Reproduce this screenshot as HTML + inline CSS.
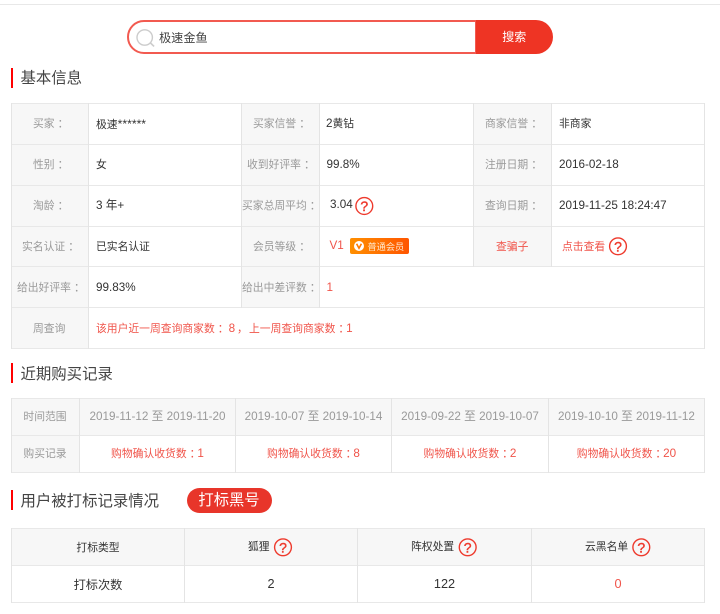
<!DOCTYPE html>
<html lang="zh"><head><meta charset="utf-8"><title>查询</title>
<style>
html,body{margin:0;padding:0;background:#fff}
#p{position:relative;width:720px;height:614px;overflow:hidden;background:#fff;font-family:"Liberation Sans","Noto Sans CJK SC",sans-serif;font-size:10.8px;color:#333}
#p div{position:absolute;box-sizing:border-box}
.h{height:1px;background:#e8e8e8}
.v{width:1px;background:#e4e4e4}
.g{background:#f7f7f7}
.t{white-space:nowrap;height:16px;line-height:16px;margin-top:1px}
.l{color:#999}
.r{color:#f0544a}
.c{text-align:center}
.n{font-size:11.7px}
i{font-style:normal;position:relative;left:3px}
b{font-weight:normal;font-size:11.7px}
.hd{font-size:15.4px;color:#444;height:22px;line-height:22px;white-space:nowrap;left:20.5px;margin-top:1px}
.bar{left:11px;width:2px;height:20px;background:#f00}
svg{position:absolute;overflow:visible}
.q{font-family:"Liberation Sans",sans-serif;font-size:14px;fill:#ee3a2d;stroke:#ee3a2d;stroke-width:.4;text-anchor:middle}
</style></head><body><div id="p">
<div style="left:0;top:4px;width:720px;height:1px;background:#e8e8e8"></div>

<!-- search -->
<div style="left:126.5px;top:20px;width:350px;height:34px;border:2px solid #f25a50;border-radius:17px 0 0 17px;background:#fff"></div>
<div style="left:475.5px;top:20px;width:77.5px;height:34px;background:#ee3424;border-radius:0 17px 17px 0;color:#fff;font-size:12px;line-height:34px;text-align:center">搜索</div>
<svg style="left:0;top:0" width="1" height="1"><circle cx="144.7" cy="37.5" r="7.7" fill="none" stroke="#ccc" stroke-width="1.4"/><path d="M150.5 43l3.6 3.4" stroke="#ccc" stroke-width="1.6" fill="none"/></svg>
<div class="t" style="left:159px;top:29px;font-size:12.2px;color:#444">极速金鱼</div>

<div class="bar" style="top:68px"></div><div class="hd" style="top:67px">基本信息</div>

<!-- table 1 -->
<div class="g" style="left:11px;top:103px;width:78px;height:246px"></div>
<div class="g" style="left:241px;top:103px;width:79px;height:205px"></div>
<div class="g" style="left:473px;top:103px;width:79px;height:164px"></div>
<div class="h" style="left:11px;top:103px;width:694px"></div>
<div class="h" style="left:11px;top:144px;width:694px"></div>
<div class="h" style="left:11px;top:185px;width:694px"></div>
<div class="h" style="left:11px;top:226px;width:694px"></div>
<div class="h" style="left:11px;top:266px;width:694px"></div>
<div class="h" style="left:11px;top:307px;width:694px"></div>
<div class="h" style="left:11px;top:348px;width:694px"></div>
<div class="v" style="left:11px;top:103px;height:246px"></div>
<div class="v" style="left:88px;top:103px;height:246px"></div>
<div class="v" style="left:241px;top:103px;height:205px"></div>
<div class="v" style="left:319px;top:103px;height:205px"></div>
<div class="v" style="left:473px;top:103px;height:164px"></div>
<div class="v" style="left:551px;top:103px;height:164px"></div>
<div class="v" style="left:704px;top:103px;height:246px"></div>

<div class="t l" style="left:33px;top:115px">买家<i>：</i></div>
<div class="t" style="left:96px;top:115px">极速<span style="font-size:12.2px">******</span></div>
<div class="t l" style="left:253px;top:115px">买家信誉<i>：</i></div>
<div class="t" style="left:326px;top:115px"><b>2</b>黄钻</div>
<div class="t l" style="left:485px;top:115px">商家信誉<i>：</i></div>
<div class="t" style="left:559px;top:115px">非商家</div>

<div class="t l" style="left:33px;top:156px">性别<i>：</i></div>
<div class="t" style="left:96px;top:156px">女</div>
<div class="t l" style="left:247px;top:156px">收到好评率<i>：</i></div>
<div class="t n" style="left:326.5px;top:156px">99.8%</div>
<div class="t l" style="left:485px;top:156px">注册日期<i>：</i></div>
<div class="t n" style="left:559px;top:156px">2016-02-18</div>

<div class="t l" style="left:33px;top:197px">淘龄<i>：</i></div>
<div class="t n" style="left:96px;top:197px">3 年+</div>
<div class="t l" style="left:242px;top:197px">买家总周平均<i>：</i></div>
<div class="t n" style="left:330px;top:196px">3.04</div>
<div class="t l" style="left:485px;top:197px">查询日期<i>：</i></div>
<div class="t n" style="left:559px;top:197px">2019-11-25 18:24:47</div>

<div class="t l" style="left:22px;top:238px">实名认证<i>：</i></div>
<div class="t" style="left:96px;top:238px">已实名认证</div>
<div class="t l" style="left:253px;top:238px">会员等级<i>：</i></div>
<div class="t r n" style="left:329.5px;top:237px">V1</div>
<div style="left:349.5px;top:238px;width:59.5px;height:16px;border-radius:2px;background:linear-gradient(90deg,#ff8f00,#ff5500)"></div>
<svg style="left:0;top:0" width="1" height="1"><circle cx="359" cy="246" r="5" fill="#fff"/><path d="M356.6 243.8l2.4 4.4 2.4-4.4" fill="none" stroke="#ff7a00" stroke-width="1.6"/></svg>
<div class="t" style="left:367.5px;top:238px;font-size:9.2px;color:#ffe9d0">普通会员</div>
<div class="t r" style="left:496px;top:238px">查骗子</div>
<div class="t r" style="left:562px;top:238px">点击查看</div>

<div class="t l" style="left:17px;top:279px">给出好评率<i>：</i></div>
<div class="t n" style="left:96px;top:279px">99.83%</div>
<div class="t l" style="left:242px;top:279px">给出中差评数<i>：</i></div>
<div class="t r n" style="left:326.5px;top:279px">1</div>

<div class="t l" style="left:33px;top:320px">周查询</div>
<div class="t r" style="left:96px;top:320px">该用户近一周查询商家数<i>：</i> <b>8</b></div>
<div class="t r" style="left:234px;top:320px"><i>，</i></div>
<div class="t r" style="left:249px;top:320px">上一周查询商家数<i>：</i><b>1</b></div>

<div class="bar" style="top:363px"></div><div class="hd" style="top:363px">近期购买记录</div>

<!-- table 2 -->
<div class="g" style="left:11px;top:398px;width:694px;height:37px"></div>
<div class="g" style="left:11px;top:435px;width:69px;height:37px"></div>
<div class="h" style="left:11px;top:398px;width:694px"></div>
<div class="h" style="left:11px;top:435px;width:694px"></div>
<div class="h" style="left:11px;top:472px;width:694px"></div>
<div class="v" style="left:11px;top:398px;height:75px"></div>
<div class="v" style="left:79px;top:398px;height:75px"></div>
<div class="v" style="left:235px;top:398px;height:75px"></div>
<div class="v" style="left:391px;top:398px;height:75px"></div>
<div class="v" style="left:548px;top:398px;height:75px"></div>
<div class="v" style="left:704px;top:398px;height:75px"></div>

<div class="t l c" style="left:11px;width:68px;top:408px">时间范围</div>
<div class="t l c n" style="left:80px;width:155px;top:408px">2019-11-12 至 2019-11-20</div>
<div class="t l c n" style="left:236px;width:155px;top:408px">2019-10-07 至 2019-10-14</div>
<div class="t l c n" style="left:392px;width:156px;top:408px">2019-09-22 至 2019-10-07</div>
<div class="t l c n" style="left:549px;width:155px;top:408px">2019-10-10 至 2019-11-12</div>
<div class="t l c" style="left:11px;width:68px;top:445px">购买记录</div>
<div class="t r c" style="left:80px;width:155px;top:445px">购物确认收货数<i>：</i><b>1</b></div>
<div class="t r c" style="left:236px;width:155px;top:445px">购物确认收货数<i>：</i><b>8</b></div>
<div class="t r c" style="left:392px;width:156px;top:445px">购物确认收货数<i>：</i><b>2</b></div>
<div class="t r c" style="left:549px;width:155px;top:445px">购物确认收货数<i>：</i><b>20</b></div>

<div class="bar" style="top:490px"></div><div class="hd" style="top:490px">用户被打标记录情况</div>
<div style="left:186.5px;top:488px;width:85px;height:25px;border-radius:13px;background:#e8352a;color:#fff;font-size:15.3px;line-height:25px;text-align:center">打标黑号</div>

<!-- table 3 -->
<div class="g" style="left:11px;top:528px;width:694px;height:38px"></div>
<div class="h" style="left:11px;top:528px;width:694px"></div>
<div class="h" style="left:11px;top:565px;width:694px"></div>
<div class="h" style="left:11px;top:602px;width:694px"></div>
<div class="v" style="left:11px;top:528px;height:75px"></div>
<div class="v" style="left:184px;top:528px;height:75px"></div>
<div class="v" style="left:357px;top:528px;height:75px"></div>
<div class="v" style="left:531px;top:528px;height:75px"></div>
<div class="v" style="left:704px;top:528px;height:75px"></div>

<div class="t c" style="left:12px;width:172px;top:539px">打标类型</div>
<div class="t" style="left:248px;top:538px">狐狸</div>
<div class="t" style="left:411px;top:538px">阵权处置</div>
<div class="t" style="left:585px;top:538px">云黑名单</div>
<div class="t c" style="left:12px;width:172px;top:576px;font-size:12.2px">打标次数</div>
<div class="t c" style="left:185px;width:172px;top:575px;font-size:12.7px">2</div>
<div class="t c" style="left:358px;width:173px;top:575px;font-size:12.7px">122</div>
<div class="t c r" style="left:532px;width:172px;top:575px;font-size:12.7px">0</div>

<!-- help icons -->
<svg style="left:0;top:0" width="1" height="1">
<g fill="none" stroke="#ee3a2d" stroke-width="1.4">
<circle cx="364.3" cy="206" r="8.4"/><circle cx="618" cy="246.3" r="8.4"/><circle cx="283" cy="547.3" r="8.4"/><circle cx="467.7" cy="547.3" r="8.4"/><circle cx="641.3" cy="547.3" r="8.4"/>
</g>
<text class="q" x="364.3" y="211">?</text>
<text class="q" x="618" y="251.3">?</text>
<text class="q" x="283" y="552.3">?</text>
<text class="q" x="467.7" y="552.3">?</text>
<text class="q" x="641.3" y="552.3">?</text>
</svg>
</div></body></html>
